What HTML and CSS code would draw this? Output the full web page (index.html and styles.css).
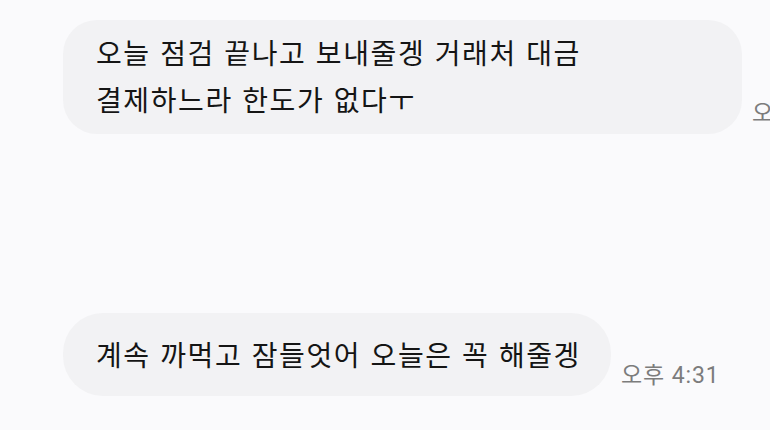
FILE: index.html
```html
<!DOCTYPE html>
<html lang="ko">
<head>
    <meta charset="UTF-8" />
    <meta name="viewport" content="width=device-width, initial-scale=1.0"/>
    <title>대화</title>
    <link rel="stylesheet" href="styles.css">
</head>
<body>
    <div class="chat">
        <div class="row">
            <div class="bubble">오늘 점검 끝나고 보내줄겡 거래처 대금<br>결제하느라 한도가 없다ㅜ</div>
            <span class="time">오후 4:31</span>
        </div>
        <div class="row row-last">
            <div class="bubble bubble-single">계속 까먹고 잠들엇어 오늘은 꼭 해줄겡</div>
            <span class="time">오후 4:31</span>
        </div>
    </div>
</body>
</html>
```

FILE: styles.css
```css
body {
    margin: 0;
    padding: 0;
    background: #fafafc;
    font-family: "Noto Sans CJK KR", "Noto Sans", sans-serif;
    overflow: hidden;
}
.chat {
    width: 770px;
    height: 430px;
    padding: 20px 0 0 63px;
    box-sizing: border-box;
}
.row {
    display: flex;
    align-items: flex-end;
    gap: 10px;
    white-space: nowrap;
}
.row-last {
    margin-top: 179px;
}
.bubble {
    background: #f2f2f4;
    color: #151515;
    font-size: 28px;
    letter-spacing: 1.6px;
    line-height: 47px;
    padding: 9px 33px 11px;
    border-radius: 34px;
    width: 613px;
    flex-shrink: 0;
}
.bubble-single {
    width: auto;
    padding: 18px 30px 18px 33px;
    border-radius: 40px;
}
.time {
    color: #7c7c7c;
    font-family: Roboto, "Noto Sans CJK KR", sans-serif;
    font-size: 23px;
    letter-spacing: 0.9px;
    line-height: 28px;
    padding-bottom: 6px;
}
```
